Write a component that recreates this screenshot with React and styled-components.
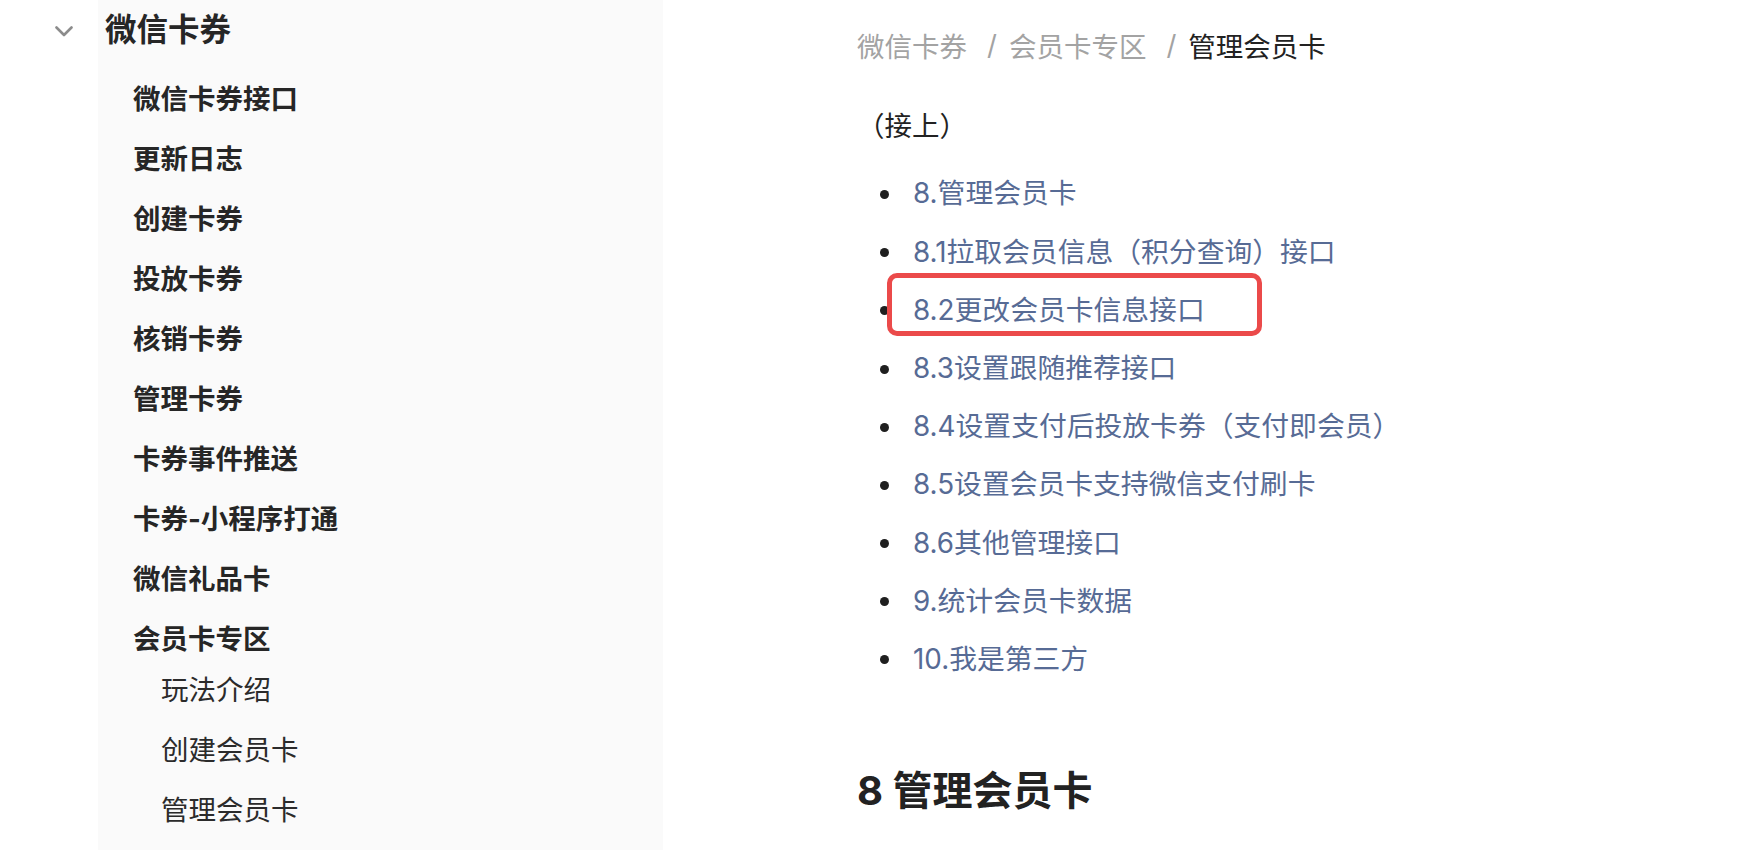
import React from "react";
import styled, { createGlobalStyle } from "styled-components";

const GlobalStyle = createGlobalStyle`
  html, body {
    margin: 0;
    padding: 0;
    background: #ffffff;
  }
  body {
    font-family: Inter, "Noto Sans CJK SC", "Noto Sans", sans-serif;
    -webkit-font-smoothing: antialiased;
  }
  * { box-sizing: border-box; }
`;

const Page = styled.div`
  display: flex;
  height: 100vh;
  overflow: hidden;
  background: #ffffff;
`;

const Sidebar = styled.aside`
  width: 663px;
  flex-shrink: 0;
  display: flex;
`;

const Gutter = styled.div`
  width: 98px;
  flex-shrink: 0;
  padding: 26px 0 0 55px;
  color: #8c8c8c;

  svg {
    display: block;
  }
`;

const NavPanel = styled.nav`
  flex: 1;
  background: #fafafa;
`;

const NavHeader = styled.div`
  height: 60px;
  line-height: 60px;
  padding-left: 7px;
  font-size: 31.5px;
  font-weight: 700;
  color: #262626;
`;

const NavList = styled.ul`
  list-style: none;
  margin: 0;
  padding: 9px 0 0 0;
`;

const NavItem = styled.li`
  height: 60px;
  line-height: 60px;
  padding-left: ${(p) => (p.$sub ? 63 : 35)}px;
  font-size: 27.5px;
  font-weight: ${(p) => (p.$sub ? 400 : 700)};
  color: ${(p) => (p.$sub ? "#2b2b2b" : "#262626")};
  white-space: nowrap;
`;

const SubList = styled.ul`
  list-style: none;
  margin: -9px 0 0 0;
  padding: 0;
`;

const Main = styled.main`
  flex: 1;
  padding: 25px 0 0 194px;
  color: #222222;
`;

const Breadcrumb = styled.div`
  display: flex;
  align-items: center;
  height: 40px;
  font-size: 27.5px;
  white-space: nowrap;
`;

const Crumb = styled.span`
  color: ${(p) => (p.$current ? "#222222" : "#a3a3a3")};
`;

const Separator = styled.span`
  margin: 0 12px 0 20px;
  color: #a3a3a3;
`;

const Paragraph = styled.p`
  margin: 39px 0 0 0;
  line-height: 44px;
  font-size: 27.5px;
  color: #222222;
`;

const LinkList = styled.ul`
  list-style: none;
  margin: 16.4px 0 0 0;
  padding: 0 0 0 56px;
`;

const LinkItem = styled.li`
  position: relative;
  height: 58.2px;
  line-height: 58.2px;
  font-size: 27.8px;
  color: #576b95;
  white-space: nowrap;

  &::before {
    content: "";
    position: absolute;
    left: -33.5px;
    top: 50%;
    width: 9px;
    height: 9px;
    margin-top: -3.5px;
    border-radius: 50%;
    background: #1f1f1f;
  }
`;

const Highlight = styled.span`
  position: absolute;
  left: -26px;
  top: -7.3px;
  width: 375px;
  height: 62.5px;
  border: 5px solid #eb4a4a;
  border-radius: 10px;
  pointer-events: none;
`;

const Heading = styled.h2`
  margin: 74.8px 0 0 0;
  line-height: 56px;
  font-size: 40px;
  font-weight: 700;
  color: #222222;
`;

const Chevron = () => (
  <svg width="18" height="11" viewBox="0 0 18 11" fill="none">
    <polyline
      points="1.5,1.5 9,9 16.5,1.5"
      stroke="currentColor"
      strokeWidth="2.6"
      strokeLinecap="round"
      strokeLinejoin="round"
    />
  </svg>
);

const navItems = [
  "微信卡券接口",
  "更新日志",
  "创建卡券",
  "投放卡券",
  "核销卡券",
  "管理卡券",
  "卡券事件推送",
  "卡券-小程序打通",
  "微信礼品卡",
];

const subItems = ["玩法介绍", "创建会员卡", "管理会员卡"];

const links = [
  "8.管理会员卡",
  "8.1拉取会员信息（积分查询）接口",
  "8.2更改会员卡信息接口",
  "8.3设置跟随推荐接口",
  "8.4设置支付后投放卡券（支付即会员）",
  "8.5设置会员卡支持微信支付刷卡",
  "8.6其他管理接口",
  "9.统计会员卡数据",
  "10.我是第三方",
];

export default function App() {
  return (
    <>
      <GlobalStyle />
      <Page>
        <Sidebar>
          <Gutter>
            <Chevron />
          </Gutter>
          <NavPanel>
            <NavHeader>微信卡券</NavHeader>
            <NavList>
              {navItems.map((t) => (
                <NavItem key={t}>{t}</NavItem>
              ))}
              <li>
                <NavItem as="div">会员卡专区</NavItem>
                <SubList>
                  {subItems.map((t) => (
                    <NavItem key={t} $sub>
                      {t}
                    </NavItem>
                  ))}
                </SubList>
              </li>
            </NavList>
          </NavPanel>
        </Sidebar>
        <Main>
          <Breadcrumb>
            <Crumb>微信卡券</Crumb>
            <Separator>/</Separator>
            <Crumb>会员卡专区</Crumb>
            <Separator>/</Separator>
            <Crumb $current>管理会员卡</Crumb>
          </Breadcrumb>
          <Paragraph>（接上）</Paragraph>
          <LinkList>
            {links.map((t, i) => (
              <LinkItem key={t}>
                {t}
                {i === 2 && <Highlight />}
              </LinkItem>
            ))}
          </LinkList>
          <Heading>8 管理会员卡</Heading>
        </Main>
      </Page>
    </>
  );
}
